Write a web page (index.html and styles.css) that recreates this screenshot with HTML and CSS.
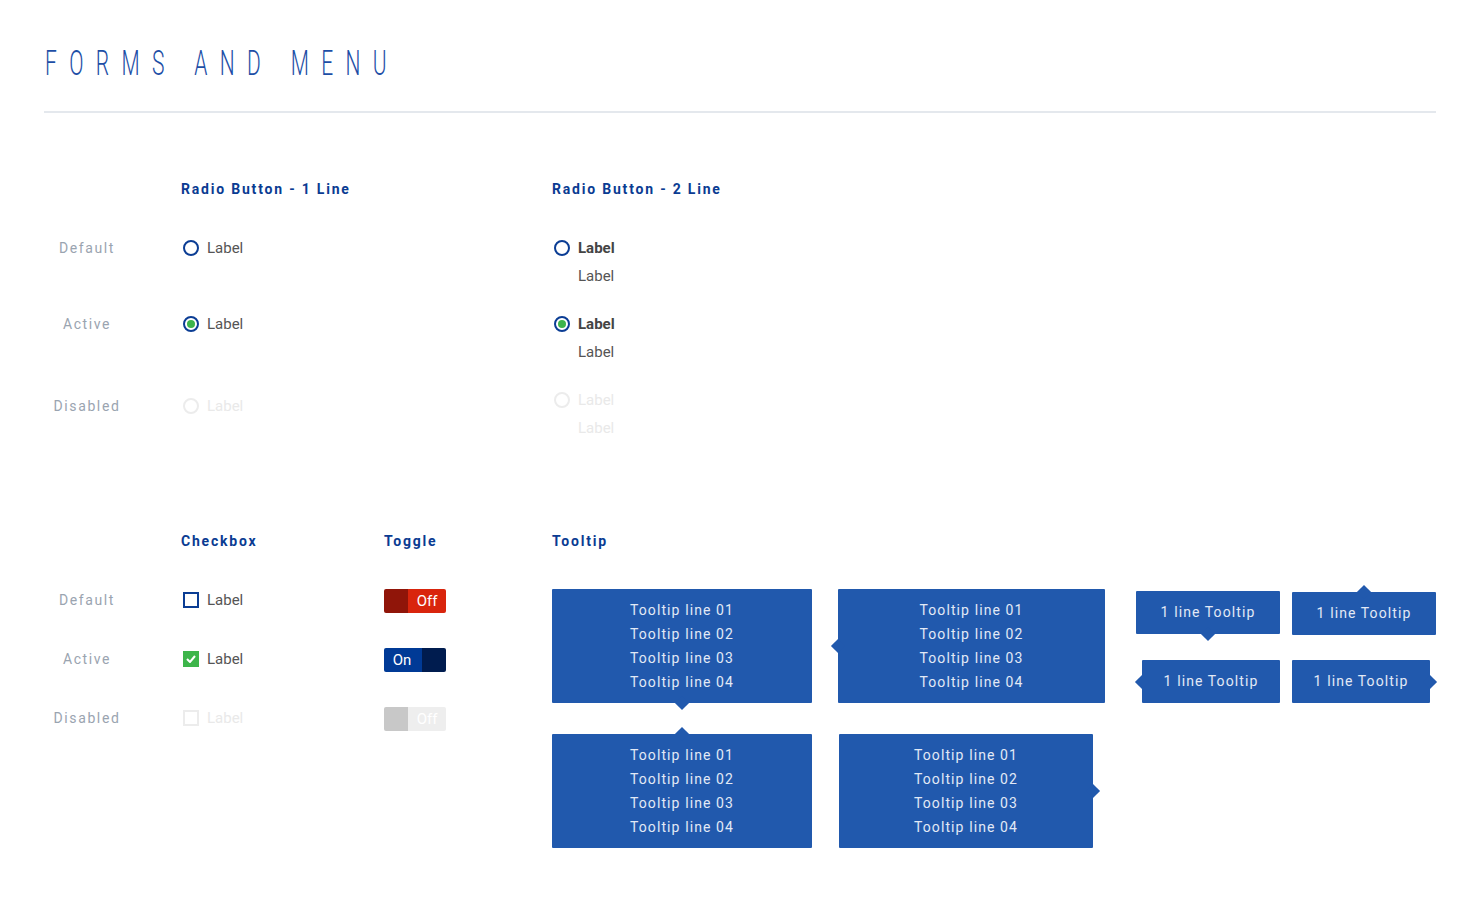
FILE: index.html
```html
<!DOCTYPE html>
<html lang="en">
<head>
    <meta charset="UTF-8">
    <title>Forms and Menu</title>
    <link rel="stylesheet" href="styles.css">
</head>
<body>
    <div class="page">
        <h1 class="title"><span>FORMS AND MENU</span></h1>
        <hr class="divider">

        <!-- radio buttons -->
        <section class="radios">
            <div class="row head">
                <span></span>
                <h2 class="heading">Radio Button - 1 Line</h2>
                <h2 class="heading">Radio Button - 2 Line</h2>
            </div>
            <div class="row">
                <span class="state">Default</span>
                <label class="radio"><span class="dot"></span>Label</label>
                <label class="radio two"><span class="dot"></span><span class="lines"><b>Label</b><span>Label</span></span></label>
            </div>
            <div class="row">
                <span class="state">Active</span>
                <label class="radio"><span class="dot on"></span>Label</label>
                <label class="radio two"><span class="dot on"></span><span class="lines"><b>Label</b><span>Label</span></span></label>
            </div>
            <div class="row">
                <span class="state low">Disabled</span>
                <label class="radio off low"><span class="dot"></span>Label</label>
                <label class="radio two off"><span class="dot"></span><span class="lines"><span>Label</span><span>Label</span></span></label>
            </div>
        </section>

        <section class="controls">
            <div class="states">
                <span></span>
                <h2 class="heading">Checkbox</h2>
                <h2 class="heading">Toggle</h2>

                <span class="state">Default</span>
                <label class="check"><span class="box"></span>Label</label>
                <div class="toggle is-off"><span class="knob"></span><span class="text">Off</span></div>

                <span class="state">Active</span>
                <label class="check"><span class="box on"><svg width="10" height="8" viewBox="0 0 10 8"><path d="M1 4l3 3 5-6" fill="none" stroke="#fff" stroke-width="2"/></svg></span>Label</label>
                <div class="toggle is-on"><span class="text">On</span><span class="knob"></span></div>

                <span class="state">Disabled</span>
                <label class="check off"><span class="box"></span>Label</label>
                <div class="toggle is-disabled"><span class="knob"></span><span class="text">Off</span></div>
            </div>

            <div class="tips">
                <h2 class="heading">Tooltip</h2>
                <div class="tip-grid">
                    <div class="tip big arrow-down">Tooltip line 01<br>Tooltip line 02<br>Tooltip line 03<br>Tooltip line 04</div>
                    <div class="tip big wide arrow-left">Tooltip line 01<br>Tooltip line 02<br>Tooltip line 03<br>Tooltip line 04</div>
                    <div class="small-tips">
                        <div class="tip small a arrow-down">1 line Tooltip</div>
                        <div class="tip small b arrow-up">1 line Tooltip</div>
                        <div class="tip small c arrow-left">1 line Tooltip</div>
                        <div class="tip small d arrow-right">1 line Tooltip</div>
                    </div>
                    <div class="tip big arrow-up">Tooltip line 01<br>Tooltip line 02<br>Tooltip line 03<br>Tooltip line 04</div>
                    <div class="tip big narrow arrow-right">Tooltip line 01<br>Tooltip line 02<br>Tooltip line 03<br>Tooltip line 04</div>
                </div>
            </div>
        </section>
    </div>
</body>
</html>
```
FILE: styles.css
```css
body {
    margin: 0;
    font-family: Roboto, "Liberation Sans", sans-serif;
    background: #fff;
}
.page {
    padding: 40px 39px 0 44px;
}
.title {
    margin: 0;
    font-size: 35px;
    font-weight: 300;
    color: #1d4ea6;
    line-height: 48px;
    padding-left: 1px;
    white-space: nowrap;
}
/* narrow light face, squeezed like the condensed original */
.title span {
    display: inline-block;
    letter-spacing: 20.6px;
    transform: scaleX(0.6);
    transform-origin: left center;
}
.divider {
    border: 0;
    height: 2px;
    background: #e4e8ed;
    margin: 23px 0 0;
}
.heading {
    margin: 0;
    font-size: 14px;
    font-weight: 700;
    letter-spacing: 1.8px;
    color: #0a3b92;
    line-height: 28px;
}
.state {
    width: 86px;
    text-align: center;
    font-size: 14px;
    letter-spacing: 1.6px;
    color: #9aa4b0;
    line-height: 28px;
}
.low {
    margin-top: 6px;
}

/* radio */
.radios {
    padding-top: 62px;
}
.row {
    display: grid;
    grid-template-columns: 137px 371px 1fr;
    align-items: start;
    height: 56px;
    margin-bottom: 20px;
}
.row.head {
    height: 28px;
    margin-bottom: 31px;
}
.radio,
.check {
    display: flex;
    align-items: center;
    gap: 8px;
    padding-left: 2px;
    font-size: 15px;
    color: #555;
    line-height: 28px;
}
.radio.two {
    align-items: flex-start;
    gap: 8px;
}
.radio.two .dot {
    margin-top: 6px;
}
.lines {
    display: flex;
    flex-direction: column;
}
.lines b {
    color: #444;
}
.dot {
    width: 16px;
    height: 16px;
    box-sizing: border-box;
    border: 2px solid #0b3d94;
    border-radius: 50%;
    display: flex;
    align-items: center;
    justify-content: center;
}
.dot.on::after {
    content: "";
    width: 8px;
    height: 8px;
    border-radius: 50%;
    background: #3cb44b;
}
.off {
    color: #e9e9e9;
}
.off .dot,
.off .box {
    border-color: #ececec;
}

/* checkbox + toggle */
.controls {
    display: flex;
    padding-top: 65px;
}
.states {
    display: grid;
    grid-template-columns: 137px 203px 168px;
    grid-auto-rows: 28px;
    row-gap: 31px;
    align-items: center;
}
.box {
    width: 16px;
    height: 16px;
    box-sizing: border-box;
    border: 2px solid #0b3d94;
    display: flex;
    align-items: center;
    justify-content: center;
}
.box.on {
    background: #3db54a;
    border-color: #3db54a;
}
.toggle {
    display: flex;
    width: 62px;
    height: 24px;
    border-radius: 2px;
    overflow: hidden;
    font-size: 15px;
    color: #fff;
    line-height: 24px;
    margin-top: 2px;
}
.toggle .knob {
    width: 24px;
}
.toggle .text {
    flex: 1;
    text-align: center;
}
.is-off .knob { background: #901509; }
.is-off .text { background: #d9250d; }
.is-on .text { background: #003a96; padding-right: 2px; }
.is-on .knob { background: #001c4f; }
.is-disabled .knob { background: #c8c8c8; }
.is-disabled .text { background: #eeeeee; }

/* tooltips */
.tips .heading {
    margin-bottom: 34px;
}
.tip-grid {
    display: grid;
    grid-template-columns: 286px 298px 300px;
    grid-template-rows: 114px 114px;
    row-gap: 31px;
}
.tip {
    position: relative;
    background: #2159ad;
    color: #e2e9f6;
    text-align: center;
    font-size: 14px;
    letter-spacing: 1.1px;
    border-radius: 1px;
}
.tip.big {
    width: 260px;
    padding: 9px 0;
    line-height: 24px;
    box-sizing: border-box;
    height: 114px;
}
.tip.wide {
    width: 267px;
}
.tip.narrow {
    width: 254px;
    margin-left: 1px;
}
.tip::after {
    content: "";
    position: absolute;
    width: 10px;
    height: 10px;
    background: #2159ad;
    transform: rotate(45deg);
}
.arrow-down::after { bottom: -5px; left: calc(50% - 5px); }
.arrow-up::after { top: -5px; left: calc(50% - 5px); }
.arrow-left::after { left: -5px; top: calc(50% - 5px); }
.arrow-right::after { right: -5px; top: calc(50% - 5px); }

.small-tips {
    display: grid;
    grid-template-columns: 156px 144px;
    grid-template-rows: 71px 43px;
    align-items: start;
}
.tip.small {
    height: 43px;
    line-height: 43px;
    width: 144px;
}
.tip.a { margin-top: 2px; }
.tip.b { margin-top: 3px; }
.tip.c { margin-left: 6px; width: 138px; }
.tip.d { width: 138px; }
```
